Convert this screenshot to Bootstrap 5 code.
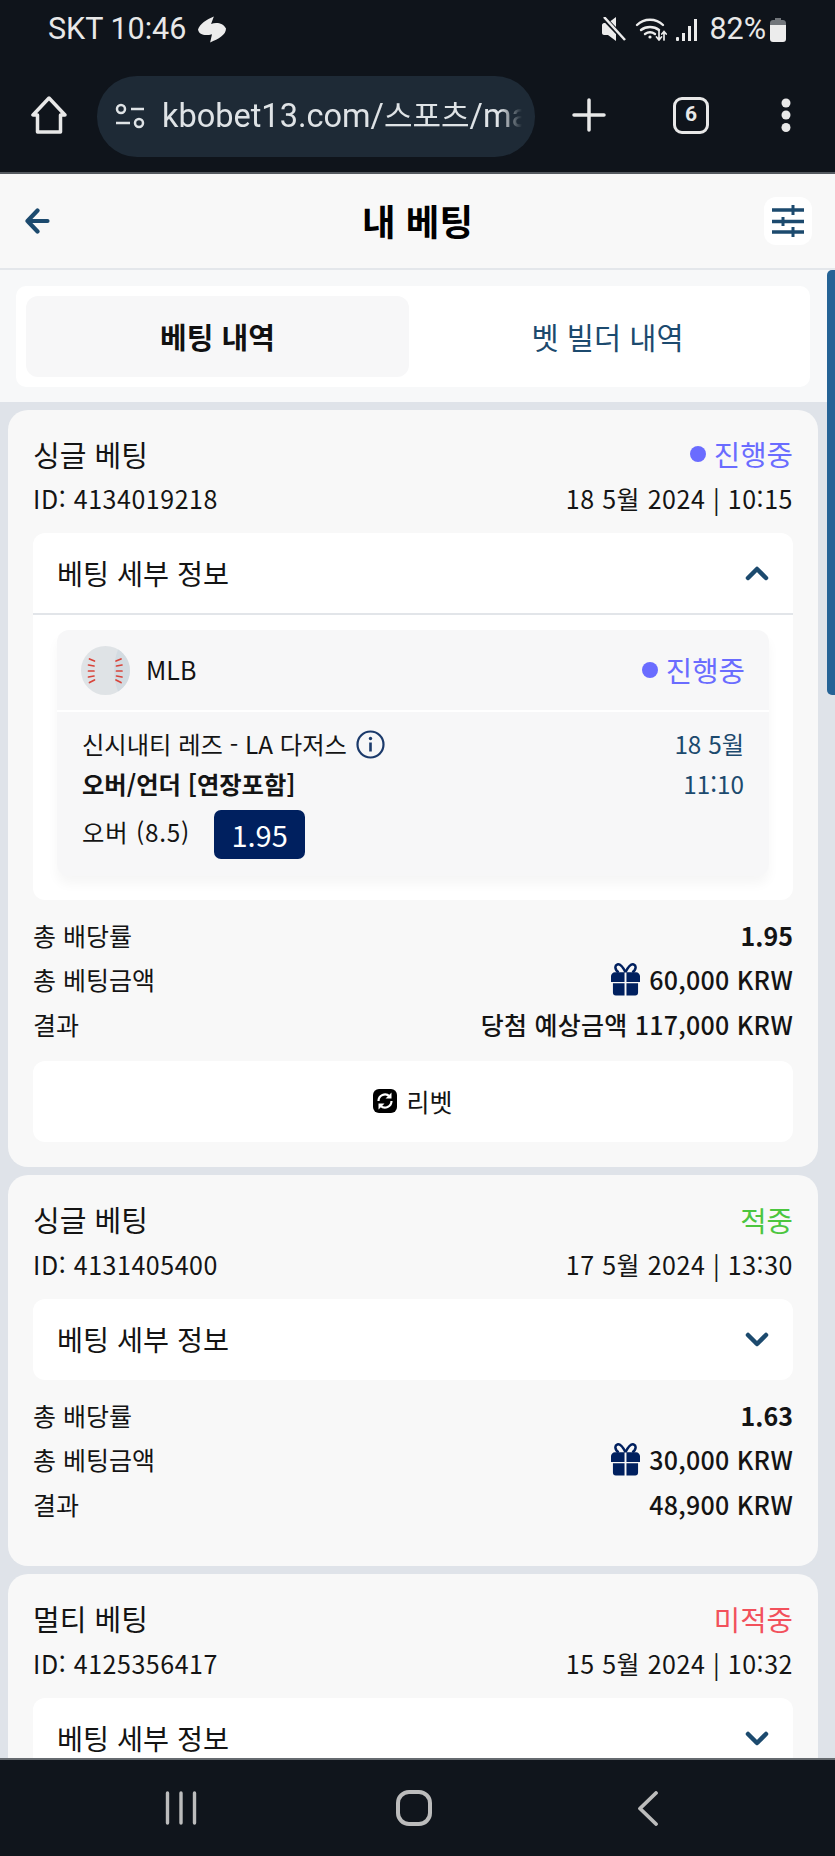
<!DOCTYPE html>
<html lang="ko">
<head>
<meta charset="UTF-8">
<meta name="viewport" content="width=device-width, initial-scale=1.0">
<title>내 베팅</title>
<link href="https://cdn.jsdelivr.net/npm/bootstrap@5.3.0/dist/css/bootstrap.min.css" rel="stylesheet">
<style>
html, body { height: 100%; overflow: hidden; }
body { background: #dfe3e9; font-family: "Noto Sans CJK KR", "Noto Sans", sans-serif; color: #141414; font-size: 25px; }
svg { flex: none; display: block; }
.phone-shell { height: 1856px; width: 835px; }

.sys-top { height: 174px; background: #0f141b; color: #e8e8e8; flex: none; border-bottom: 2px solid #555a60; font-family: Roboto, sans-serif; }
.status-row { height: 58px; padding: 0 49px 0 48px; font-size: 30.5px; }
.sync-ico { margin-left: 4px; }
.stat-gap { margin-left: 9px; }
.stat-pct { margin-left: 11px; }
.url-row { height: 114px; padding: 0 0 0 31px; position: relative; }
.url-pill { width: 438px; height: 81px; margin-left: 30px; background: #1e2a36; border-radius: 40px; font-size: 32.5px; color: #dfe3e6; white-space: nowrap; padding-left: 18px; margin-top: 2px; }
.url-text { overflow: hidden; width: 360px; margin-left: 17px; font-family: Roboto, "Noto Sans CJK KR", sans-serif; -webkit-mask-image: linear-gradient(to right, #000 94%, transparent); mask-image: linear-gradient(to right, #000 94%, transparent); }
.url-hangul { font-size: 31px; line-height: 1; font-family: "Noto Sans CJK KR", sans-serif; }
.tab-count { width: 36px; height: 37px; border: 3.5px solid #e8e8e8; border-radius: 9px; font-size: 21px; font-weight: 700; margin-left: 67px; }
.plus-ico { margin-left: 37px; }
.dots-ico { margin-left: 72px; }

.content-area { flex: 1; overflow: hidden; position: relative; }
.head-bar { height: 96px; background: #f8f8f8; border-bottom: 2px solid #e4e7eb; padding: 0 23px 0 25px; position: relative; }
.head-title { font-size: 36.5px; font-weight: 700; color: #000; position: absolute; left: 0; right: 0; text-align: center; }
.filter-btn { width: 48px; height: 48px; background: #fff; border-radius: 12px; position: relative; }
.tab-wrap { background: #f7f8f9; padding: 16px 25px 15px 16px; height: 132px; }
.tab-box { background: #fff; border-radius: 10px; padding: 10px; height: 101px; }
.tab-on { width: 383px; background: #f7f7f8; border-radius: 12px; font-weight: 700; font-size: 29px; color: #111; }
.tab-off { font-size: 29.5px; color: #1c4a6e; padding-left: 6px; }

.bet-box { background: #f8f8f8; border: 0; border-radius: 20px; margin: 8px 17px 0 8px; padding: 23px 25px 25px 25px; color: #141414; }
.bet-box-short { padding-bottom: 40px; }
.bet-name { font-size: 29px; line-height: 42px; }
.meta-line { font-size: 25px; line-height: 42px; margin-top: 2px; letter-spacing: .55px; }
.st-live { color: #6a6cff; font-size: 28.7px; line-height: 42px; }
.st-dot { width: 16px; height: 16px; border-radius: 50%; background: #6a6cff; margin-right: 8px; }
.st-win { color: #4cc63f; font-size: 28.7px; }
.st-lose { color: #f2515c; font-size: 28.7px; }
.detail-box { background: #fff; border-radius: 12px; margin-top: 14px; }
.detail-head { height: 81px; padding: 0 24px; font-size: 28.3px; }
.detail-open { height: 82px; border-bottom: 2px solid #e2e5e9; }
.detail-body { padding: 15px 24px 24px; }
.sel-box { background: #f7f7f8; border-radius: 12px; box-shadow: 0 8px 12px rgba(0,0,0,.04); }
.sel-top { height: 82px; padding: 0 24px; border-bottom: 2px solid #fff; }
.ball-ico { margin-right: 16px; }
.sel-main { padding: 12px 25px 17px 25px; font-size: 24.3px; }
.sel-line { line-height: 40px; }
.sel-when { color: #1c4a6e; }
.info-ico { margin-left: 9px; }
.pick-row { margin-top: 6px; }
.pick-label { letter-spacing: .8px; margin-bottom: 4px; }
.odd-chip { background: #00205f; color: #fff; width: 91px; height: 49px; border-radius: 7px; font-size: 29px; margin-left: 24px; }
.sum-wrap { margin-top: 13px; }
.sum-line { line-height: 44.3px; }
.sum-val { font-weight: 500; letter-spacing: .25px; }
.sum-strong { font-weight: 700; letter-spacing: 0; }
.gift-ico { margin-right: 9px; }
.rebet-btn { background: #fff; border-radius: 12px; height: 81px; margin-top: 15px; }
.rebet-ico { margin-right: 9px; }
.scroll-thumb { position: absolute; right: 0; top: 96px; width: 8px; height: 425px; background: #256396; border-radius: 5px 0 0 5px; }

.sys-bottom { height: 98px; background: #10151c; border-top: 2px solid #666b70; flex: none; padding-left: 165px; gap: 199px; }
.nav-back { margin-left: 6px; }
</style>
</head>
<body>
<div class="phone-shell d-flex flex-column">
  <div class="sys-top">
    <div class="status-row d-flex align-items-center justify-content-between">
      <div class="d-flex align-items-center gap-2">
        <span>SKT 10:46</span>
        <svg class="sync-ico" width="28" height="27" viewBox="0 0 30 28" fill="#ececec"><path d="M17 0L14 8C20 6 27 7 30 13C30 20 22 24 13 28L15 19C8 21 1 20 0 14C2 8 9 3 17 0Z"/></svg>
      </div>
      <div class="d-flex align-items-center">
        <svg width="25" height="24" viewBox="0 0 25 24" fill="#ececec"><path d="M1 8c0-1 1-2 2-2h4l8-6v24l-8-6H3c-1 0-2-1-2-2z"/><path d="M2 0l22 23" stroke="#0f141b" stroke-width="5"/><path d="M3 0l21 23" stroke="#ececec" stroke-width="2.5"/></svg>
        <svg class="stat-gap" width="32" height="24" viewBox="0 0 32 24" fill="none" stroke="#ececec" stroke-linecap="round"><path stroke-width="2.4" d="M2 8c7-7 19-7 26 0M6 13c5-4 13-4 18 0M10 17c3-2 7-2 10 0"/><circle cx="15" cy="20" r="1.6" fill="#ececec" stroke="none"/><path stroke-width="1.7" d="M24 14v9M21.500 20l2.500 3 2.500-3M29 23v-8M26.800 17l2.200-2.500 2.200 2.500"/></svg>
        <svg class="stat-gap" width="22" height="23" viewBox="0 0 22 23" fill="#ececec"><rect x="0" y="19" width="3" height="4" rx="1"/><rect x="6" y="15" width="3" height="8"/><rect x="12" y="8" width="3" height="15"/><rect x="18" y="1" width="3" height="22"/></svg>
        <span class="stat-pct">82%</span>
        <svg class="ms-1" width="16" height="25" viewBox="0 0 16 25"><path d="M5 1h6v2h2c1.500 0 3 1 3 3v2H0V6c0-2 1.500-3 3-3h2z" fill="#72767b"/><path d="M0 8h16v14c0 2-1 3-3 3H3c-2 0-3-1-3-3z" fill="#ececec"/></svg>
      </div>
    </div>
    <div class="url-row d-flex align-items-center">
      <svg width="36" height="38" viewBox="0 0 36 38" fill="none" stroke="#e8e8e8" stroke-width="3.5" stroke-linejoin="round"><path d="M18 2L2 19h4.500v17h23V19H34z"/></svg>
      <div class="url-pill d-flex align-items-center">
        <svg width="30" height="26" viewBox="0 0 30 26" fill="none" stroke="#dfe3e6" stroke-width="2.5"><circle cx="6" cy="6" r="4"/><path d="M16 6h13M1 20h14"/><circle cx="24" cy="20" r="4"/></svg>
        <div class="url-text">kbobet13.com/<span class="url-hangul">스포츠</span>/ma</div>
      </div>
      <svg class="plus-ico" width="34" height="34" viewBox="0 0 34 34" stroke="#e8e8e8" stroke-width="3.5" stroke-linecap="round"><path d="M17 2v30M2 17h30"/></svg>
      <div class="tab-count d-flex align-items-center justify-content-center">6</div>
      <svg class="dots-ico" width="10" height="34" viewBox="0 0 10 34" fill="#e8e8e8"><circle cx="5" cy="5" r="4.500"/><circle cx="5" cy="17" r="4.500"/><circle cx="5" cy="29.500" r="4.500"/></svg>
    </div>
  </div>

  <div class="content-area">
    <div class="head-bar d-flex align-items-center justify-content-between">
      <svg width="25" height="26" viewBox="0 0 25 26" fill="none" stroke="#1c4a6e" stroke-width="4.2" stroke-linecap="round" stroke-linejoin="round"><path d="M12.500 2.500L2.500 13l10 10.500M2.500 13h20"/></svg>
      <div class="head-title">내 베팅</div>
      <div class="filter-btn d-flex align-items-center justify-content-center">
        <svg width="32" height="32" viewBox="0 0 32 32" fill="none" stroke="#1c4a6e" stroke-width="3.5"><path d="M0 5h32M0 16.500h32M0 27h32"/><path stroke-width="3" d="M21 0v10M11 12v9M21 22v10"/></svg>
      </div>
    </div>
    <div class="tab-wrap">
      <div class="tab-box d-flex">
        <div class="tab-on d-flex align-items-center justify-content-center">베팅 내역</div>
        <div class="tab-off flex-grow-1 d-flex align-items-center justify-content-center">벳 빌더 내역</div>
      </div>
    </div>

    <div class="card bet-box">
      <div class="d-flex justify-content-between align-items-center">
        <div class="bet-name">싱글 베팅</div>
        <div class="st-live d-flex align-items-center"><span class="st-dot"></span>진행중</div>
      </div>
      <div class="meta-line d-flex justify-content-between">
        <div>ID: 4134019218</div>
        <div>18 5월 2024 | 10:15</div>
      </div>
      <div class="detail-box">
        <div class="detail-head detail-open d-flex align-items-center justify-content-between">
          <span>베팅 세부 정보</span>
          <svg width="24" height="15" viewBox="0 0 24 15" fill="none" stroke="#1c4a6e" stroke-width="4.5" stroke-linecap="round" stroke-linejoin="round"><path d="M3 12l9-9 9 9"/></svg>
        </div>
        <div class="detail-body">
          <div class="sel-box">
            <div class="sel-top d-flex align-items-center">
              <svg class="ball-ico" width="49" height="49" viewBox="0 0 49 49"><circle cx="24.500" cy="24.500" r="24.500" fill="#dfe3e6"/><path d="M37 3.500a24.500 24.500 0 0 1 0 42C32 33 32 16 37 3.500z" fill="#d3dbe1"/><g stroke="#d9443a" stroke-width="1.700" stroke-linecap="round"><path d="M8.500 13l5 2M7.500 19l5.500 1M7.500 25h5.500M7.500 31l5.500-1M8.500 36.500l5-2.500M40 13l-5 2M41 19l-5.500 1M41 25h-5.500M41 31l-5.500-1M40 36.500l-5-2.500"/></g></svg>
              <span>MLB</span>
              <div class="st-live d-flex align-items-center ms-auto"><span class="st-dot"></span>진행중</div>
            </div>
            <div class="sel-main">
              <div class="d-flex justify-content-between sel-line">
                <div class="d-flex align-items-center">신시내티 레즈 - LA 다저스
                  <svg class="info-ico" width="29" height="29" viewBox="0 0 29 29" fill="none" stroke="#1b3a6b" stroke-width="2.2"><circle cx="14.500" cy="14.500" r="13"/><path d="M14.500 12.500v9" stroke-width="2.6"/><circle cx="14.500" cy="8.500" r="1.700" fill="#1b3a6b" stroke="none"/></svg>
                </div>
                <div class="sel-when">18 5월</div>
              </div>
              <div class="d-flex justify-content-between sel-line">
                <div class="fw-bold">오버/언더 [연장포함]</div>
                <div class="sel-when">11:10</div>
              </div>
              <div class="d-flex align-items-center pick-row">
                <span class="pick-label">오버 (8.5)</span>
                <div class="odd-chip d-flex align-items-center justify-content-center">1.95</div>
              </div>
            </div>
          </div>
        </div>
      </div>
      <div class="sum-wrap">
        <div class="sum-line d-flex justify-content-between"><span>총 배당률</span><span class="sum-val sum-strong">1.95</span></div>
        <div class="sum-line d-flex justify-content-between"><span>총 베팅금액</span>
          <span class="sum-val d-flex align-items-center">
            <svg class="gift-ico" width="29" height="33" viewBox="0 0 30 33" fill="#00205f"><path d="M15 9C12 3 9 0 6.500 1 3.500 2 4 7 8 9M15 9c3-6 6-9 8.500-8 3 1 2.500 6-1.500 8" fill="none" stroke="#00205f" stroke-width="2.6"/><path d="M4 9h10v10H0v-6c0-2 2-4 4-4zM16 9H26c2 0 4 2 4 4v6H16zM2 20.500h12V33H5c-2 0-3-1-3-3zM16 20.500H28V30c0 2-1 3-3 3h-9z"/></svg>60,000 KRW</span></div>
        <div class="sum-line d-flex justify-content-between"><span>결과</span><span class="sum-val">당첨 예상금액 117,000 KRW</span></div>
      </div>
      <div class="rebet-btn d-flex align-items-center justify-content-center">
        <svg class="rebet-ico" width="24" height="24" viewBox="0 0 24 24"><rect width="24" height="24" rx="6" fill="#000"/><path d="M5.500 12a6.500 6.500 0 0 1 11-4.700M18.500 12a6.500 6.500 0 0 1-11 4.700" fill="none" stroke="#fff" stroke-width="2.2"/><path d="M18.500 3.500v6h-6zM5.500 20.500v-6h6z" fill="#fff"/></svg>
        <span>리벳</span>
      </div>
    </div>

    <div class="card bet-box bet-box-short">
      <div class="d-flex justify-content-between align-items-center">
        <div class="bet-name">싱글 베팅</div>
        <div class="st-win">적중</div>
      </div>
      <div class="meta-line d-flex justify-content-between">
        <div>ID: 4131405400</div>
        <div>17 5월 2024 | 13:30</div>
      </div>
      <div class="detail-box">
        <div class="detail-head d-flex align-items-center justify-content-between">
          <span>베팅 세부 정보</span>
          <svg width="24" height="15" viewBox="0 0 24 15" fill="none" stroke="#1c4a6e" stroke-width="4.5" stroke-linecap="round" stroke-linejoin="round"><path d="M3 3l9 9 9-9"/></svg>
        </div>
      </div>
      <div class="sum-wrap">
        <div class="sum-line d-flex justify-content-between"><span>총 배당률</span><span class="sum-val sum-strong">1.63</span></div>
        <div class="sum-line d-flex justify-content-between"><span>총 베팅금액</span>
          <span class="sum-val d-flex align-items-center">
            <svg class="gift-ico" width="29" height="33" viewBox="0 0 30 33" fill="#00205f"><path d="M15 9C12 3 9 0 6.500 1 3.500 2 4 7 8 9M15 9c3-6 6-9 8.500-8 3 1 2.500 6-1.500 8" fill="none" stroke="#00205f" stroke-width="2.6"/><path d="M4 9h10v10H0v-6c0-2 2-4 4-4zM16 9H26c2 0 4 2 4 4v6H16zM2 20.500h12V33H5c-2 0-3-1-3-3zM16 20.500H28V30c0 2-1 3-3 3h-9z"/></svg>30,000 KRW</span></div>
        <div class="sum-line d-flex justify-content-between"><span>결과</span><span class="sum-val">48,900 KRW</span></div>
      </div>
    </div>

    <div class="card bet-box">
      <div class="d-flex justify-content-between align-items-center">
        <div class="bet-name">멀티 베팅</div>
        <div class="st-lose">미적중</div>
      </div>
      <div class="meta-line d-flex justify-content-between">
        <div>ID: 4125356417</div>
        <div>15 5월 2024 | 10:32</div>
      </div>
      <div class="detail-box">
        <div class="detail-head d-flex align-items-center justify-content-between">
          <span>베팅 세부 정보</span>
          <svg width="24" height="15" viewBox="0 0 24 15" fill="none" stroke="#1c4a6e" stroke-width="4.5" stroke-linecap="round" stroke-linejoin="round"><path d="M3 3l9 9 9-9"/></svg>
        </div>
      </div>
    </div>

    <div class="scroll-thumb"></div>
  </div>

  <div class="sys-bottom d-flex align-items-center">
    <svg width="32" height="34" viewBox="0 0 32 34" fill="none" stroke="#bcbcbc" stroke-width="3.4" stroke-linecap="round"><path d="M2.500 2v30M16 2v30M29.500 2v30"/></svg>
    <svg width="36" height="36" viewBox="0 0 36 36" fill="none" stroke="#bcbcbc" stroke-width="4"><rect x="2" y="2" width="32" height="32" rx="11"/></svg>
    <svg class="nav-back" width="22" height="35" viewBox="0 0 22 35" fill="none" stroke="#bcbcbc" stroke-width="3.8" stroke-linecap="round" stroke-linejoin="round"><path d="M19 2L3 17.500 19 33"/></svg>
  </div>
</div>
</body>
</html>
